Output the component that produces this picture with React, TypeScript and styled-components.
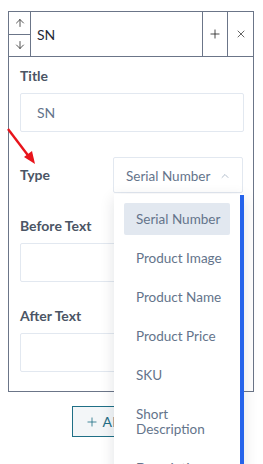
import React from 'react'
import styled, { createGlobalStyle } from 'styled-components'
import { ArrowUp, ArrowDown, Plus, X, ChevronUp } from 'lucide-react'

const Global = createGlobalStyle`
  body {
    margin: 0;
    background: #ffffff;
    font-family: Lato, "Open Sans", sans-serif;
  }
`

const Page = styled.div`
  position: relative;
  width: 263px;
  height: 464px;
  overflow: hidden;
  padding: 11px 10px 0 8px;
  box-sizing: border-box;
`

const Panel = styled.div`
  position: relative;
  border: 1px solid #6b7588;
  width: 246px;
  box-sizing: border-box;
`

const Header = styled.div`
  display: flex;
  height: 44px;
  border-bottom: 1px solid #6b7588;
`

const Arrows = styled.div`
  display: flex;
  flex-direction: column;
  width: 21px;
  border-right: 1px solid #6b7588;
`

const ArrowBtn = styled.div<{ $top?: boolean }>`
  flex: 1;
  display: flex;
  align-items: center;
  justify-content: center;
  color: #2b2b2b;
  border-bottom: ${p => (p.$top ? '1px solid #6b7588' : 'none')};
`

const Name = styled.div`
  flex: 1;
  display: flex;
  align-items: center;
  padding-left: 6px;
  font-size: 14px;
  color: #1f2937;
`

const IconCell = styled.div<{ $w: number }>`
  width: ${p => p.$w}px;
  border-left: 1px solid #6b7588;
  display: flex;
  align-items: center;
  justify-content: center;
  color: #222;
`

const Body = styled.div`
  display: flex;
  flex-direction: column;
  padding: 9px 9px 19px 11px;
`

const Field = styled.div<{ $mt?: number }>`
  display: flex;
  flex-direction: column;
  gap: 7px;
  margin-top: ${p => p.$mt ?? 0}px;
`

const Label = styled.div`
  height: 20px;
  line-height: 20px;
  font-size: 14px;
  font-weight: 700;
  color: #4b5565;
`

const Input = styled.div`
  height: 39px;
  box-sizing: border-box;
  border: 1px solid #e2e8f0;
  border-radius: 2px;
  display: flex;
  align-items: center;
  padding-left: 16px;
  font-size: 14px;
  color: #64748b;
`

const TypeRow = styled.div`
  position: relative;
  display: flex;
  align-items: center;
  justify-content: space-between;
  height: 36px;
  margin-top: 25px;
`

const Select = styled.div`
  width: 130px;
  height: 36px;
  margin-right: 1px;
  box-sizing: border-box;
  border: 1px solid #e2e8f0;
  border-radius: 2px;
  display: flex;
  align-items: center;
  justify-content: space-between;
  padding: 1px 11px 0 12px;
  font-size: 13.5px;
  color: #64748b;
`

const Menu = styled.div`
  position: absolute;
  top: 37px;
  right: 0;
  width: 130px;
  height: 300px;
  background: #ffffff;
  box-shadow: 0 4px 14px rgba(15, 23, 42, 0.12);
  padding: 9px 14px 0 10px;
  box-sizing: border-box;
  display: flex;
  flex-direction: column;
  gap: 7px;
  z-index: 5;
`

const Thumb = styled.div`
  position: absolute;
  top: 1px;
  right: 0;
  width: 4px;
  bottom: 0;
  background: #2563eb;
`

const Item = styled.div<{ $active?: boolean }>`
  padding: 8.5px 12px;
  line-height: 15px;
  font-size: 13.5px;
  white-space: nowrap;
  color: #64748b;
  border-radius: 2px;
  background: ${p => (p.$active ? '#e2e8f0' : 'transparent')};
`

const AddRow = styled.div`
  display: flex;
  justify-content: center;
  padding-top: 14px;
  width: 246px;
`

const AddBtn = styled.div`
  height: 31px;
  box-sizing: border-box;
  border: 1px solid #1f6f86;
  background: #f3f6f8;
  display: flex;
  align-items: center;
  gap: 4px;
  padding: 0 12px;
  font-size: 14px;
  color: #1f6f86;
  letter-spacing: 0.3px;
`

const Annotation = styled.svg`
  position: absolute;
  left: 0;
  top: 120px;
  z-index: 6;
`

const options = [
  'Serial Number',
  'Product Image',
  'Product Name',
  'Product Price',
  'SKU',
  'Short Description',
  'Description',
]

export default function App() {
  return (
    <Page>
      <Global />
      <Panel>
        <Header>
          <Arrows>
            <ArrowBtn $top>
              <ArrowUp size={12} strokeWidth={1.6} />
            </ArrowBtn>
            <ArrowBtn>
              <ArrowDown size={12} strokeWidth={1.6} />
            </ArrowBtn>
          </Arrows>
          <Name>SN</Name>
          <IconCell $w={24}>
            <Plus size={14} strokeWidth={1.4} />
          </IconCell>
          <IconCell $w={25}>
            <X size={12} strokeWidth={1.4} />
          </IconCell>
        </Header>
        <Body>
          <Field>
            <Label>Title</Label>
            <Input>SN</Input>
          </Field>
          <TypeRow>
            <Label>Type</Label>
            <Select>
              <span>Serial Number</span>
              <ChevronUp size={12} strokeWidth={1.4} color="#94a3b8" />
            </Select>
            <Menu>
              <Thumb />
              {options.map((o, i) => (
                <Item key={o} $active={i === 0}>
                  {o === 'Short Description' ? (
                    <>
                      Short
                      <br />
                      Description
                    </>
                  ) : (
                    o
                  )}
                </Item>
              ))}
            </Menu>
          </TypeRow>
          <Field $mt={23}>
            <Label>Before Text</Label>
            <Input />
          </Field>
          <Field $mt={24}>
            <Label>After Text</Label>
            <Input />
          </Field>
        </Body>
      </Panel>
      <AddRow>
        <AddBtn>
          <Plus size={14} strokeWidth={1.4} />
          ADD FIELD
        </AddBtn>
      </AddRow>
      <Annotation width="50" height="50" viewBox="0 0 50 50">
        <line x1="8" y1="9" x2="30" y2="38" stroke="#e8141b" strokeWidth="2.4" />
        <polygon points="35,44 24,37 32,31" fill="#e8141b" />
      </Annotation>
    </Page>
  )
}
